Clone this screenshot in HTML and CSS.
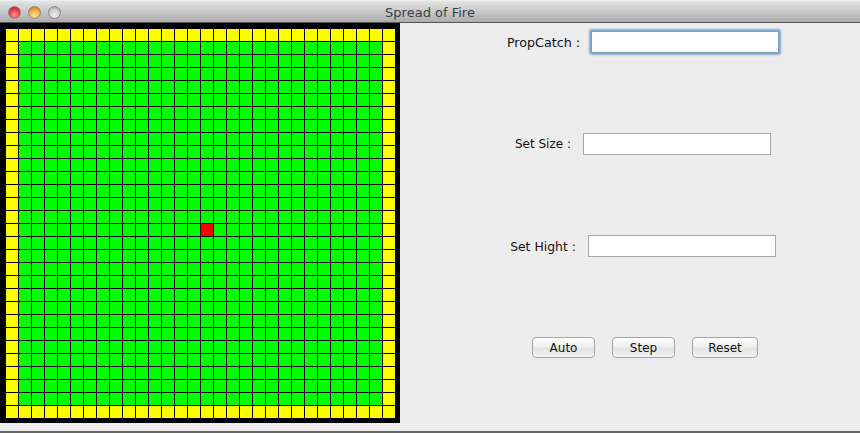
FILE: index.html
```html
<!DOCTYPE html>
<html lang="en">
<head>
<meta charset="utf-8">
<title>Spread of Fire</title>
<link rel="stylesheet" href="styles.css">
</head>
<body>
<div class="window">
  <header class="titlebar">
    <div class="lights">
      <span class="light light-close"></span>
      <span class="light light-min"></span>
      <span class="light light-zoom"></span>
    </div>
    <div class="title">Spread of Fire</div>
  </header>
  <main class="content">
    <div class="board"><div class="grid" id="grid"></div></div>
    <section class="panel">
      <div class="row row-prop">
        <label class="label">PropCatch :</label>
        <input class="field field-focus" type="text">
      </div>
      <div class="row row-size">
        <label class="label">Set Size :</label>
        <input class="field" type="text">
      </div>
      <div class="row row-hight">
        <label class="label">Set Hight :</label>
        <input class="field" type="text">
      </div>
      <div class="buttons">
        <button class="btn btn-auto" type="button">Auto</button>
        <button class="btn btn-step" type="button">Step</button>
        <button class="btn btn-reset" type="button">Reset</button>
      </div>
    </section>
  </main>
</div>
<script src="app.js"></script>
</body>
</html>
```
FILE: styles.css
```css
* { box-sizing: border-box; }
html, body { margin: 0; padding: 0; height: 100%; overflow: hidden; background: #fff; }
body { font-family: "DejaVu Sans", "Noto Sans", sans-serif; font-size: 12px; color: #111; }
.window { height: 433px; display: flex; flex-direction: column; background: #ededed; }
.titlebar {
  position: relative; flex: 0 0 23px; display: flex; align-items: center; justify-content: center;
  background: linear-gradient(#e4e4e4, #acacac); border-bottom: 1px solid #555;
  border-top: 1px solid #eeeeee;
}
.lights { position: absolute; left: 8px; top: 5px; display: flex; gap: 7px; }
.light { width: 13px; height: 13px; border-radius: 50%; border: 1px solid #888; }
.light-close { background: radial-gradient(circle at 50% 70%, #ff9a9a, #ea3a44 55%, #a82428); }
.light-min { background: radial-gradient(circle at 50% 75%, #ffe29a, #eeaa44 55%, #a8702a); }
.light-zoom { background: radial-gradient(circle at 50% 70%, #f2f2f2, #cccccc 55%, #969696); }
.title { font-size: 13px; color: #3c3c3c; margin-top: 1px; }
.content { flex: 1; display: flex; border-bottom: 2px solid #666; }
.board { flex: 0 0 400px; height: 400px; background: #000; padding: 6px 5px 5px 6px; }
.grid { display: grid; grid-template-columns: repeat(30, 12px); grid-auto-rows: 12px; gap: 1px; }
.cell { background: #00ff00; }
.cell-edge { background: #ffff00; }
.cell-fire { background: #ff0000; }
.panel { flex: 1; display: flex; flex-direction: column; align-items: center; padding: 8px 0 0 26px; }
.row { display: flex; align-items: center; gap: 12px; height: 22px; }
.row-prop { gap: 11px; }
.row-size { margin-top: 80px; }
.row-hight { margin-top: 80px; }
.row-prop .label { font-size: 12.7px; margin-top: 1px; }
.row-hight .label { font-size: 12.4px; }
.label { white-space: nowrap; }
.field { width: 188px; height: 22px; border: 1px solid #a8a8a8; background: #fff; padding: 0 4px; outline: none; border-radius: 0; }
.field-focus { border: 1px solid #6f9fc9; box-shadow: 0 0 2px 1.5px #7faad2; border-radius: 1px; }
.buttons { display: flex; gap: 17px; margin-top: 80px; margin-left: 4px; }
.btn {
  width: 63px; height: 21px; padding: 0; font: inherit; color: #111;
  border: 1px solid #a6a6a6; border-radius: 4px; background: linear-gradient(#ffffff, #ececec 50%, #e2e2e2 55%, #f4f4f4);
}
.btn-reset { width: 66px; }
```
FILE: app.js
```js
const grid = document.getElementById('grid');
const size = 30;
const fragment = document.createDocumentFragment();
for (let r = 0; r < size; r++) {
  for (let c = 0; c < size; c++) {
    const cell = document.createElement('div');
    cell.className = 'cell';
    if (r === 0 || c === 0 || r === size - 1 || c === size - 1) cell.classList.add('cell-edge');
    if (r === 15 && c === 15) cell.classList.add('cell-fire');
    fragment.appendChild(cell);
  }
}
grid.appendChild(fragment);
```
